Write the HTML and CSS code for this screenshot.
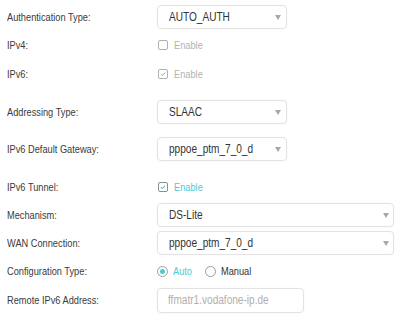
FILE: index.html
```html
<!DOCTYPE html>
<html>
<head>
<meta charset="utf-8">
<link rel="stylesheet" href="styles.css">
</head>
<body>
<div class="form">
  <div class="row">
    <div class="label"><span class="t">Authentication Type:</span></div>
    <div class="select"><span class="t">AUTO_AUTH</span><i class="arrow"></i></div>
  </div>
  <div class="row">
    <div class="label"><span class="t">IPv4:</span></div>
    <label class="check disabled"><span class="box"></span><span class="txt t">Enable</span></label>
  </div>
  <div class="row tall">
    <div class="label"><span class="t">IPv6:</span></div>
    <label class="check disabled"><span class="box checked"><svg viewBox="0 0 10 10"><path d="M2.3 5.2 L4.2 7 L7.6 3.2" fill="none" stroke="#9a9a9a" stroke-width="1.1"/></svg></span><span class="txt t">Enable</span></label>
  </div>
  <div class="row gap">
    <div class="label"><span class="t">Addressing Type:</span></div>
    <div class="select"><span class="t">SLAAC</span><i class="arrow"></i></div>
  </div>
  <div class="row gap9">
    <div class="label"><span class="t">IPv6 Default Gateway:</span></div>
    <div class="select"><span class="t">pppoe_ptm_7_0_d</span><i class="arrow"></i></div>
  </div>
  <div class="row gap">
    <div class="label"><span class="t">IPv6 Tunnel:</span></div>
    <label class="check active"><span class="box checked"><svg viewBox="0 0 10 10"><path d="M2.3 5.2 L4.2 7 L7.6 3.2" fill="none" stroke="#4acbd6" stroke-width="1.3"/></svg></span><span class="txt t">Enable</span></label>
  </div>
  <div class="row">
    <div class="label"><span class="t">Mechanism:</span></div>
    <div class="select wide"><span class="t">DS-Lite</span><i class="arrow"></i></div>
  </div>
  <div class="row">
    <div class="label"><span class="t">WAN Connection:</span></div>
    <div class="select wide"><span class="t">pppoe_ptm_7_0_d</span><i class="arrow"></i></div>
  </div>
  <div class="row">
    <div class="label"><span class="t">Configuration Type:</span></div>
    <div class="radios">
      <label class="radio on"><span class="dot"></span><span class="txt t">Auto</span></label>
      <label class="radio"><span class="dot"></span><span class="txt t">Manual</span></label>
    </div>
  </div>
  <div class="row gap1">
    <div class="label"><span class="t">Remote IPv6 Address:</span></div>
    <div class="input"><span class="t">ffmatr1.vodafone-ip.de</span></div>
  </div>
</div>
</body>
</html>
```

FILE: styles.css
```css
html, body {
  margin: 0;
  padding: 0;
  background: #ffffff;
}
body {
  font-family: "Liberation Sans", Arial, sans-serif;
  font-size: 11px;
  color: #333333;
}
.t {
  display: inline-block;
  transform: scaleX(0.84);
  transform-origin: left center;
  white-space: nowrap;
}
.form {
  padding-top: 3px;
  display: flex;
  flex-direction: column;
}
.row {
  height: 28px;
  display: flex;
  align-items: center;
}
.row.tall { height: 29px; }
.row.gap { margin-top: 10px; }
.row.gap9 { margin-top: 9px; }
.row.gap1 { margin-top: 1px; }
.label {
  width: 150px;
  padding-left: 7px;
  color: #3a3a3a;
  white-space: nowrap;
}
.select, .input {
  box-sizing: border-box;
  width: 130px;
  height: 24px;
  border: 1px solid #e3e3e3;
  border-radius: 4px;
  box-shadow: 0 0 2px rgba(0,0,0,0.06);
  display: flex;
  align-items: center;
  padding-left: 11px;
  font-size: 12px;
  color: #333;
  position: relative;
}
.select.wide { width: 237px; }
.input {
  width: 147px;
  height: 25px;
  color: #b0b0b0;
  padding-left: 10px;
}
.arrow {
  position: absolute;
  right: 5px;
  top: 9px;
  width: 0;
  height: 0;
  border-left: 3.5px solid transparent;
  border-right: 3.5px solid transparent;
  border-top: 5px solid #a8a8a8;
}
.select.wide .arrow { right: 4px; }
.check {
  display: flex;
  align-items: center;
  margin-left: 1px;
}
.box {
  box-sizing: border-box;
  width: 10px;
  height: 10px;
  border: 1px solid #a0a0a0;
  border-radius: 2px;
  margin-right: 6px;
  display: flex;
}
.box svg { width: 8px; height: 8px; }
.check.disabled .box { border-color: #b0b0b0; }
.check.disabled .txt { color: #b3b3b3; }
.check.active .box { border-color: #8d8d8d; }
.check.active .txt { color: #4acbd6; }
.radios {
  display: flex;
  align-items: center;
}
.radio {
  display: flex;
  align-items: center;
  margin-right: 9px;
}
.dot {
  box-sizing: border-box;
  width: 11px;
  height: 11px;
  border: 1px solid #9c9c9c;
  border-radius: 50%;
  margin-right: 5px;
  display: flex;
  align-items: center;
  justify-content: center;
}
.radio.on .dot::after {
  content: "";
  width: 5px;
  height: 5px;
  border-radius: 50%;
  background: #4acbd6;
}
.radio.on .txt { color: #4acbd6; }
.radio .txt { color: #333; }
```
